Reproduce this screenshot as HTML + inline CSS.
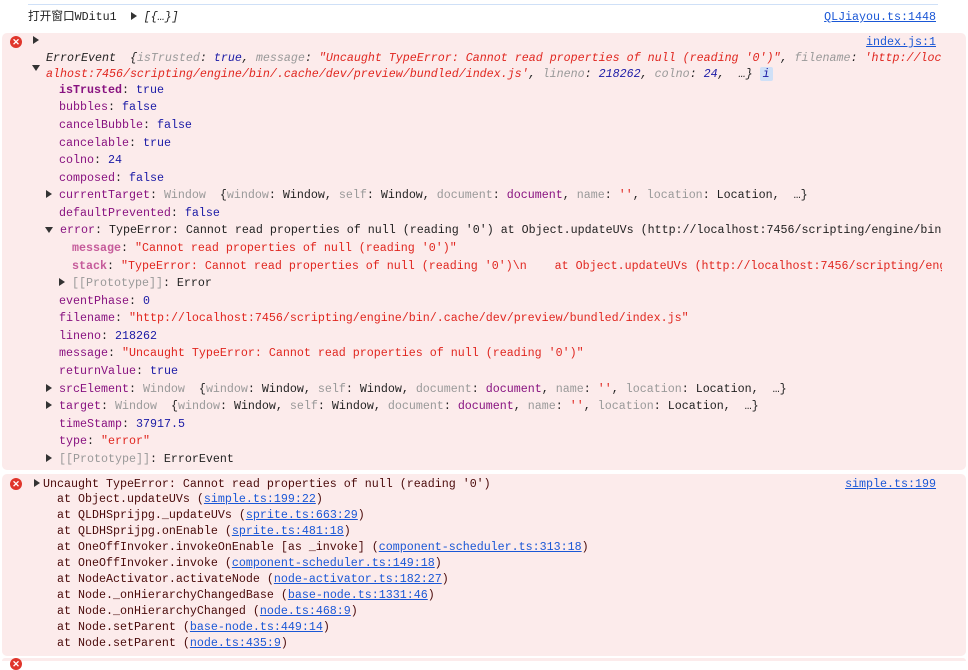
<!DOCTYPE html>
<html><head><meta charset="utf-8"><style>
body{margin:0;width:968px;height:661px;background:#fff;overflow:hidden;position:relative;font-family:"Liberation Mono","Noto Sans CJK SC",monospace;font-size:11.67px;color:#222}
.l{position:absolute;height:16px;line-height:16px;white-space:pre;overflow:hidden}
.blk{position:absolute;left:2px;right:2px;background:#fcebeb;border-radius:5px}
.k{color:#881280}.kb{color:#881280;font-weight:bold}.kl{color:#c55a9a;font-weight:bold}
.v{color:#1a1aa6}.s{color:#e0261f}.g{color:#999}.i{font-style:italic}
a{color:#1a57d6;text-decoration:underline}
.e{color:#4a0a0a}
.tr{display:inline-block;width:0;height:0;border-top:4px solid transparent;border-bottom:4px solid transparent;border-left:6px solid #333;vertical-align:0}
.td{display:inline-block;width:0;height:0;border-left:4px solid transparent;border-right:4px solid transparent;border-top:6px solid #333}
.ic{position:absolute;width:12px;height:12px;border-radius:50%;background:#e0352b;color:#fff;font:bold 9px/12px "Liberation Sans",sans-serif;text-align:center}
</style></head><body>
<div style="position:absolute;left:28px;top:4px;width:910px;height:1px;background:#cfe0f7"></div>
<div class="l" style="left:28px;top:9px">打开窗口WDitu1  <span class="tr"></span> <span class="i">[{…}]</span></div>
<div class="l" style="right:32px;top:9px"><a>QLJiayou.ts:1448</a></div>

<div class="blk" style="top:33px;height:437px"></div>
<div class="ic" style="left:10px;top:36px">✕</div>
<div class="l" style="left:33px;top:33px"><span class="tr"></span></div>
<div class="l" style="right:32px;top:34px"><a>index.js:1</a></div>
<div class="l" style="left:32px;top:60px"><span class="td"></span></div>
<div class="l i" style="left:46px;top:50px;width:896px">ErrorEvent  {<span class="g">isTrusted</span>: <span class="v">true</span>, <span class="g">message</span>: <span class="s">"Uncaught TypeError: Cannot read properties of null (reading '0')"</span>, <span class="g">filename</span>: <span class="s">'http://loc</span></div>
<div class="l i" style="left:46px;top:66px;width:896px"><span class="s">alhost:7456/scripting/engine/bin/.cache/dev/preview/bundled/index.js'</span>, <span class="g">lineno</span>: <span class="v">218262</span>, <span class="g">colno</span>: <span class="v">24</span>,  …} <span style="background:#cfe0f7;color:#1a1aa6;border-radius:2px;padding:0 3px">i</span></div>

<div class="l" style="left:59px;top:82px"><span class="kb">isTrusted</span>: <span class="v">true</span></div>
<div class="l" style="left:59px;top:99px"><span class="k">bubbles</span>: <span class="v">false</span></div>
<div class="l" style="left:59px;top:117px"><span class="k">cancelBubble</span>: <span class="v">false</span></div>
<div class="l" style="left:59px;top:135px"><span class="k">cancelable</span>: <span class="v">true</span></div>
<div class="l" style="left:59px;top:152px"><span class="k">colno</span>: <span class="v">24</span></div>
<div class="l" style="left:59px;top:170px"><span class="k">composed</span>: <span class="v">false</span></div>
<div class="l" style="left:46px;top:187px"><span class="tr"></span> <span class="k">currentTarget</span>: <span class="g">Window</span>  {<span class="g">window</span>: Window, <span class="g">self</span>: Window, <span class="g">document</span>: <span class="k">document</span>, <span class="g">name</span>: <span class="s">''</span>, <span class="g">location</span>: Location,  …}</div>
<div class="l" style="left:59px;top:205px"><span class="k">defaultPrevented</span>: <span class="v">false</span></div>
<div class="l" style="left:45px;top:222px;width:897px"><span class="td"></span> <span class="k">error</span>: TypeError: Cannot read properties of null (reading '0') at Object.updateUVs (http://localhost:7456/scripting/engine/bin/</div>
<div class="l" style="left:72px;top:240px"><span class="kl">message</span>: <span class="s">"Cannot read properties of null (reading '0')"</span></div>
<div class="l" style="left:72px;top:258px;width:870px"><span class="kl">stack</span>: <span class="s">"TypeError: Cannot read properties of null (reading '0')\n    at Object.updateUVs (http://localhost:7456/scripting/engine</span></div>
<div class="l" style="left:59px;top:275px"><span class="tr"></span> <span class="g">[[Prototype]]</span>: Error</div>
<div class="l" style="left:59px;top:293px"><span class="k">eventPhase</span>: <span class="v">0</span></div>
<div class="l" style="left:59px;top:310px"><span class="k">filename</span>: <span class="s">"http://localhost:7456/scripting/engine/bin/.cache/dev/preview/bundled/index.js"</span></div>
<div class="l" style="left:59px;top:328px"><span class="k">lineno</span>: <span class="v">218262</span></div>
<div class="l" style="left:59px;top:345px"><span class="k">message</span>: <span class="s">"Uncaught TypeError: Cannot read properties of null (reading '0')"</span></div>
<div class="l" style="left:59px;top:363px"><span class="k">returnValue</span>: <span class="v">true</span></div>
<div class="l" style="left:46px;top:381px"><span class="tr"></span> <span class="k">srcElement</span>: <span class="g">Window</span>  {<span class="g">window</span>: Window, <span class="g">self</span>: Window, <span class="g">document</span>: <span class="k">document</span>, <span class="g">name</span>: <span class="s">''</span>, <span class="g">location</span>: Location,  …}</div>
<div class="l" style="left:46px;top:398px"><span class="tr"></span> <span class="k">target</span>: <span class="g">Window</span>  {<span class="g">window</span>: Window, <span class="g">self</span>: Window, <span class="g">document</span>: <span class="k">document</span>, <span class="g">name</span>: <span class="s">''</span>, <span class="g">location</span>: Location,  …}</div>
<div class="l" style="left:59px;top:416px"><span class="k">timeStamp</span>: <span class="v">37917.5</span></div>
<div class="l" style="left:59px;top:433px"><span class="k">type</span>: <span class="s">"error"</span></div>
<div class="l" style="left:46px;top:451px"><span class="tr"></span> <span class="g">[[Prototype]]</span>: ErrorEvent</div>

<div class="blk" style="top:474px;height:182px"></div>
<div class="ic" style="left:10px;top:478px">✕</div>
<div class="l e" style="left:34px;top:476px"><span class="tr"></span><span style="margin-left:3px">Uncaught TypeError: Cannot read properties of null (reading '0')</span></div>
<div class="l" style="right:32px;top:476px"><a>simple.ts:199</a></div>
<div class="l e" style="left:57px;top:491px">at Object.updateUVs (<a>simple.ts:199:22</a>)</div>
<div class="l e" style="left:57px;top:507px">at QLDHSprijpg._updateUVs (<a>sprite.ts:663:29</a>)</div>
<div class="l e" style="left:57px;top:523px">at QLDHSprijpg.onEnable (<a>sprite.ts:481:18</a>)</div>
<div class="l e" style="left:57px;top:539px">at OneOffInvoker.invokeOnEnable [as _invoke] (<a>component-scheduler.ts:313:18</a>)</div>
<div class="l e" style="left:57px;top:555px">at OneOffInvoker.invoke (<a>component-scheduler.ts:149:18</a>)</div>
<div class="l e" style="left:57px;top:571px">at NodeActivator.activateNode (<a>node-activator.ts:182:27</a>)</div>
<div class="l e" style="left:57px;top:587px">at Node._onHierarchyChangedBase (<a>base-node.ts:1331:46</a>)</div>
<div class="l e" style="left:57px;top:603px">at Node._onHierarchyChanged (<a>node.ts:468:9</a>)</div>
<div class="l e" style="left:57px;top:619px">at Node.setParent (<a>base-node.ts:449:14</a>)</div>
<div class="l e" style="left:57px;top:635px">at Node.setParent (<a>node.ts:435:9</a>)</div>

<div class="blk" style="top:658px;height:3px;border-radius:5px 5px 0 0"></div>
<div class="ic" style="left:10px;top:658px">✕</div>
</body></html>
